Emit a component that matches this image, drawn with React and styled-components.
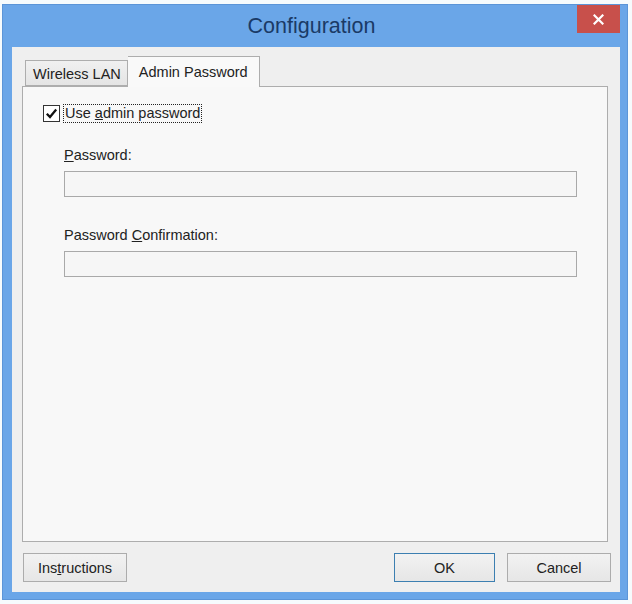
import React from 'react'
import styled, { createGlobalStyle } from 'styled-components'

const GlobalStyle = createGlobalStyle`
    html, body {
        margin:0;
        padding:0;
        background:#f6fbfd;
    }
    body {
        font-family:"Liberation Sans", Arial, sans-serif;
    }
`

const App = () => {
    return (
        <>
            <GlobalStyle />
            <Window>
                <TitleBar>
                    <span />
                    <Title>Configuration</Title>
                    <CloseButton aria-label='Close'>
                        <svg width='11' height='11' viewBox='0 0 11 11'>
                            <path d='M1.5 1.5 L9.5 9.5 M9.5 1.5 L1.5 9.5' stroke='#fff' strokeWidth='2.2' strokeLinecap='square' />
                        </svg>
                    </CloseButton>
                </TitleBar>
                <Client>
                    <TabStrip>
                        <Tab>Wireless LAN</Tab>
                        <Tab selected>Admin Password</Tab>
                    </TabStrip>
                    <Panel>
                        <CheckRow>
                            <CheckBox>
                                <svg width='13' height='13' viewBox='0 0 13 13'>
                                    <path d='M1.8 6.8 L5 10 L11.2 2.6' fill='none' stroke='#111' strokeWidth='2.3' />
                                </svg>
                            </CheckBox>
                            <FocusLabel>Use <u>a</u>dmin password</FocusLabel>
                        </CheckRow>
                        <Field>
                            <FieldLabel><u>P</u>assword:</FieldLabel>
                            <TextBox type='password' />
                        </Field>
                        <Field $gap={30}>
                            <FieldLabel>Password <u>C</u>onfirmation:</FieldLabel>
                            <TextBox type='password' />
                        </Field>
                    </Panel>
                    <Footer>
                        <Button>Ins<u>t</u>ructions</Button>
                        <Spacer />
                        <Button $default>OK</Button>
                        <Button>Cancel</Button>
                    </Footer>
                </Client>
            </Window>
        </>
    )
}

export default App

const Window = styled.div`
    width:626px;
    height:596px;
    margin:4px 0 0 2px;
    box-sizing:border-box;
    background-color:#6aa6e8;
    border:1px solid #5b95d8;
    display:flex;
    flex-direction:column;
`

const TitleBar = styled.div`
    height:43px;
    display:grid;
    grid-template-columns:1fr auto 1fr;
    align-items:start;
    padding-right:7px;
`

const Title = styled.div`
    font-size:21.5px;
    color:#1a3a66;
    line-height:42px;
`

const CloseButton = styled.div`
    justify-self:end;
    width:43px;
    height:28px;
    background-color:#c8504b;
    display:flex;
    align-items:center;
    justify-content:center;
`

const Client = styled.div`
    flex:1;
    margin:0 7px 7px 9px;
    background-color:#efefef;
    padding:9px 12px 10px 10px;
    display:flex;
    flex-direction:column;
`

const TabStrip = styled.div`
    display:flex;
    align-items:flex-end;
    padding-left:3px;
    height:30px;
    position:relative;
    z-index:1;
`

const Tab = styled.div`
    box-sizing:border-box;
    height:${p => p.selected ? '31px' : '26px'};
    padding:${p => p.selected ? '7px 11px 0 11px' : '5px 6px 0 7px'};
    margin-bottom:${p => p.selected ? '-1px' : '0'};
    font-size:14.5px;
    color:#222;
    border:1px solid #adadad;
    border-bottom:${p => p.selected ? 'none' : '1px solid #adadad'};
    border-left:${p => p.selected ? 'none' : '1px solid #adadad'};
    background:${p => p.selected ? '#f9f9f9' : 'linear-gradient(#f0f0f0, #e4e4e4)'};
`

const Panel = styled.div`
    height:456px;
    box-sizing:border-box;
    background-color:#f8f8f8;
    border:1px solid #adadad;
    padding:17px 30px 0 20px;
`

const CheckRow = styled.div`
    display:flex;
    align-items:center;
    gap:3px;
`

const CheckBox = styled.div`
    width:15px;
    height:15px;
    border:1px solid #333;
    background:#fff;
    display:flex;
    align-items:center;
    justify-content:center;
`

const FocusLabel = styled.span`
    font-size:14.5px;
    color:#222;
    border:1px dotted #222;
    padding:0 1px;
    line-height:17px;
`

const Field = styled.div`
    margin:${p => p.$gap || 24}px 0 0 21px;
    display:flex;
    flex-direction:column;
    gap:7px;
`

const FieldLabel = styled.label`
    font-size:14.5px;
    line-height:17px;
    color:#222;
`

const TextBox = styled.input`
    height:26px;
    box-sizing:border-box;
    border:1px solid #a9a9a9;
    background-color:#f6f6f6;
    outline:none;
    margin:0;
`

const Footer = styled.div`
    margin-top:11px;
    margin-right:-3px;
    display:flex;
    gap:12px;
    padding-left:1px;
`

const Spacer = styled.div`
    flex:1;
`

const Button = styled.div`
    box-sizing:border-box;
    width:${p => p.$default ? '101px' : '104px'};
    height:29px;
    display:flex;
    align-items:center;
    justify-content:center;
    font-size:14.5px;
    color:#222;
    border:1px solid ${p => p.$default ? '#3c7fb1' : '#acacac'};
    background:linear-gradient(#f2f2f2, #e6e6e6);
`
